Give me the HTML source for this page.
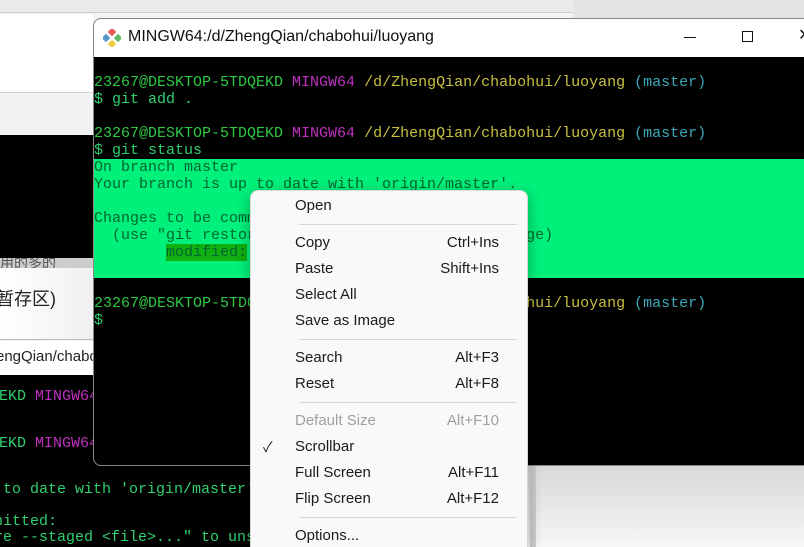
<!DOCTYPE html>
<html><head><meta charset="utf-8"><style>
*{margin:0;padding:0;box-sizing:border-box}
html{overflow:hidden;width:804px;height:547px}
body{width:804px;height:547px;overflow:hidden;position:relative;background:#f3f3f3;font-family:"Liberation Sans","Noto Sans CJK SC",sans-serif}
.abs{position:absolute}
.mono{font-family:"Liberation Mono","DejaVu Sans Mono",monospace;font-size:15px;line-height:17px;white-space:pre}
.g{color:#2ec845}.m{color:#c030c0}.y{color:#c8c040}.c{color:#3aa8b8}.w{color:#30d070}
.menu{left:250px;top:190px;width:278px;height:357px;background:#f9f9f9;border:1px solid #d8d8d8;border-bottom:none;border-radius:8px 8px 0 0;box-shadow:0 4px 14px rgba(0,0,0,.3)}
.it{position:absolute;left:44px;right:28px;font-size:15px;color:#1a1a1a;height:20px;line-height:20px}
.it span{position:absolute;right:0}
.sep{position:absolute;left:48px;right:10px;height:1px;background:#d6d6d6}
.bl{position:absolute;white-space:pre}
</style></head><body>
<div class="abs" style="left:0;top:0;width:573px;height:13px;background:#eaeaea;border-bottom:1px solid #ccc"></div>
<div class="abs" style="left:0;top:14px;width:93px;height:79px;background:#fff;border-bottom:1px solid #d0d0d0"></div>
<div class="abs" style="left:0;top:94px;width:93px;height:41px;background:#f2f2f2"></div>
<div class="abs" style="left:0;top:135px;width:93px;height:133px;background:#000"></div>
<div class="abs" style="left:0;top:258px;width:93px;height:10px;background:#ccc;overflow:hidden;font-size:14px;line-height:10px;color:#555">用的多的</div>
<div class="abs" style="left:0;top:268px;width:93px;height:72px;background:linear-gradient(90deg,#fff,#f0f0f0);border-bottom:1px solid #bbb"></div>
<div class="abs" style="left:-4px;top:285px;font-size:18px;color:#222">暂存区)</div>
<div class="abs" style="left:0;top:341px;width:93px;height:34px;background:#fff;overflow:hidden"><div style="position:absolute;left:-4px;top:7px;font-size:15px;color:#222;white-space:nowrap">engQian/chabohui</div></div>
<div class="abs mono" style="left:0;top:375px;width:260px;height:172px;background:#000;overflow:hidden">
 <div class="bl" style="left:-163px;top:13px"><span class="w">23267@DESKTOP-5TDQEKD </span><span class="m">MINGW64</span></div>
 <div class="bl" style="left:-163px;top:60px"><span class="w">23267@DESKTOP-5TDQEKD </span><span class="m">MINGW64</span></div>
 <div class="bl w" style="left:-6px;top:106px"> to date with 'origin/master'.</div>
 <div class="bl w" style="left:-6px;top:138px">nitted:</div>
 <div class="bl w" style="left:-6px;top:154px">re --staged &lt;file&gt;..." to unstage</div>
</div>
<div class="abs" style="left:528px;top:465px;width:276px;height:82px;background:linear-gradient(#d8d8d8,#f6f6f6)"></div>
<div class="abs" style="left:530px;top:465px;width:6px;height:82px;background:#ccc"></div>
<div class="abs" style="left:573px;top:0;width:231px;height:18px;background:#e4e4e4"></div>
<div class="abs" style="left:93px;top:18px;width:720px;height:448px;background:#000;border:1px solid #888;border-radius:8px;overflow:hidden">
 <div style="height:38px;background:#fff;position:relative">
  <svg style="position:absolute;left:9px;top:10px" width="18" height="18" viewBox="0 0 18 18"><rect x="6" y="0" width="6" height="6" transform="rotate(45 9 3)" fill="#e55"/><rect x="0" y="6" width="6" height="6" transform="rotate(45 3 9)" fill="#59c"/><rect x="12" y="6" width="6" height="6" transform="rotate(45 15 9)" fill="#6b6"/><rect x="6" y="12" width="6" height="6" transform="rotate(45 9 15)" fill="#ec4"/></svg>
  <div style="position:absolute;left:34px;top:9px;font-size:16px;color:#111">MINGW64:/d/ZhengQian/chabohui/luoyang</div>
  <div style="position:absolute;left:590px;top:18px;width:12px;height:1px;background:#111"></div>
  <div style="position:absolute;left:648px;top:12px;width:11px;height:11px;border:1px solid #111"></div>
  <div style="position:absolute;left:704px;top:6px;font-size:16px;color:#111">✕</div>
 </div>
 <div style="position:absolute;left:0;top:140px;width:720px;height:119px;background:#00f07a"></div>
 <div class="mono" style="position:absolute;left:0;top:55px;color:#000"><span class="g">23267@DESKTOP-5TDQEKD </span><span class="m">MINGW64 </span><span class="y">/d/ZhengQian/chabohui/luoyang </span><span class="c">(master)</span>
<span class="w">$ git add .</span>

<span class="g">23267@DESKTOP-5TDQEKD </span><span class="m">MINGW64 </span><span class="y">/d/ZhengQian/chabohui/luoyang </span><span class="c">(master)</span>
<span class="w">$ git status</span>
<span style="color:#063">On branch master
Your branch is up to date with 'origin/master'.

Changes to be committed:
  (use "git restore --staged &lt;file&gt;..." to unstage)
        <span style="background:#10b010">modified:</span>   a.txt</span>


<span class="g">23267@DESKTOP-5TDQEKD </span><span class="m">MINGW64 </span><span class="y">/d/ZhengQian/chabohui/luoyang </span><span class="c">(master)</span>
<span class="w">$</span></div>
</div>
<div class="abs menu">
 <div class="it" style="top:5px">Open</div>
 <div class="sep" style="top:33px"></div>
 <div class="it" style="top:42px">Copy<span>Ctrl+Ins</span></div>
 <div class="it" style="top:68px">Paste<span>Shift+Ins</span></div>
 <div class="it" style="top:94px">Select All</div>
 <div class="it" style="top:120px">Save as Image</div>
 <div class="sep" style="top:148px"></div>
 <div class="it" style="top:157px">Search<span>Alt+F3</span></div>
 <div class="it" style="top:183px">Reset<span>Alt+F8</span></div>
 <div class="sep" style="top:211px"></div>
 <div class="it" style="top:220px;color:#a0a0a0">Default Size<span>Alt+F10</span></div>
 <div class="it" style="top:246px">Scrollbar</div>
 <div style="position:absolute;left:12px;top:246px;font-size:14px;line-height:20px;color:#222">✓</div>
 <div class="it" style="top:272px">Full Screen<span>Alt+F11</span></div>
 <div class="it" style="top:298px">Flip Screen<span>Alt+F12</span></div>
 <div class="sep" style="top:326px"></div>
 <div class="it" style="top:335px">Options...</div>
</div>
</body></html>
